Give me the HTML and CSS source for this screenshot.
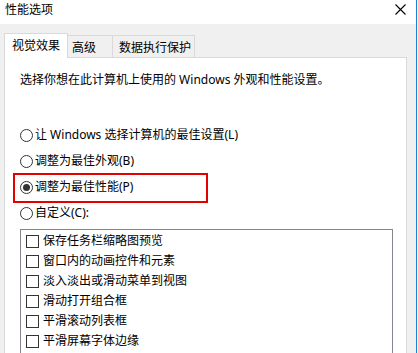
FILE: index.html
```html
<!DOCTYPE html>
<html lang="zh-CN">
<head>
<meta charset="utf-8">
<title>性能选项</title>
<link rel="stylesheet" href="styles.css">
</head>
<body>
<div class="window">
  <div class="titlebar">
    <span class="title">性能选项</span>
    <svg class="close" width="11" height="11" viewBox="0 0 11 11"><path d="M0.5 0.5 L10.5 10.5 M10.5 0.5 L0.5 10.5" stroke="#000" stroke-width="1.1" fill="none"/></svg>
  </div>
  <div class="content">
    <div class="tabs">
      <div class="tab tab-active">视觉效果</div>
      <div class="tab tab-adv">高级</div>
      <div class="tab tab-dep">数据执行保护</div>
    </div>
    <div class="panel">
      <p class="intro">选择你想在此计算机上使用的 Windows 外观和性能设置。</p>
      <div class="radios">
        <div class="radio-row"><span class="radio"></span><span class="label">让 Windows 选择计算机的最佳设置(L)</span></div>
        <div class="radio-row"><span class="radio"></span><span class="label">调整为最佳外观(B)</span></div>
        <div class="radio-row highlight"><span class="radio checked"></span><span class="label">调整为最佳性能(P)</span></div>
        <div class="radio-row"><span class="radio"></span><span class="label">自定义(C):</span></div>
      </div>
      <div class="listbox">
        <div class="check-row"><span class="checkbox"></span><span class="label">保存任务栏缩略图预览</span></div>
        <div class="check-row"><span class="checkbox"></span><span class="label">窗口内的动画控件和元素</span></div>
        <div class="check-row"><span class="checkbox"></span><span class="label">淡入淡出或滑动菜单到视图</span></div>
        <div class="check-row"><span class="checkbox"></span><span class="label">滑动打开组合框</span></div>
        <div class="check-row"><span class="checkbox"></span><span class="label">平滑滚动列表框</span></div>
        <div class="check-row"><span class="checkbox"></span><span class="label">平滑屏幕字体边缘</span></div>
      </div>
    </div>
  </div>
</div>
</body>
</html>
```

FILE: styles.css
```css
html, body {
  margin: 0;
  padding: 0;
  width: 418px;
  height: 353px;
  overflow: hidden;
  background: #ffffff;
}
body {
  font-family: "Noto Sans", "Noto Sans CJK SC", sans-serif;
  font-size: 12px;
  color: #000;
}
.window {
  width: 416px;
  height: 353px;
  overflow: hidden;
  border-right: 1px solid #1883d7;
  display: flex;
  flex-direction: column;
  background: #f0f0f0;
}
.titlebar {
  height: 24px;
  background: #fff;
  display: flex;
  align-items: center;
  justify-content: space-between;
  padding: 0 10px 0 5px;
  flex: none;
}
.title {
  line-height: 16px;
  margin-top: -4px;
}
.close {
  display: block;
  margin-top: -6px;
}
.content {
  padding: 9px 0 0 4px;
  flex: 1;
  min-height: 0;
}
.tabs {
  display: flex;
  align-items: flex-end;
  height: 24px;
  position: relative;
  z-index: 1;
}
.tab {
  box-sizing: border-box;
  background: #f0f0f0;
  border-top: 1px solid #d9d9d9;
  border-right: 1px solid #d9d9d9;
  height: 22px;
  line-height: 20px;
  padding-top: 2px;
}
.tab-active {
  width: 64px;
  height: 25px;
  margin-bottom: -1px;
  background: #fff;
  border-left: 1px solid #d9d9d9;
  padding: 2px 0 0 7px;
  line-height: 20px;
}
.tab-adv {
  width: 45px;
  padding-left: 4px;
}
.tab-dep {
  width: 82px;
  padding-left: 6px;
}
.panel {
  width: 403px;
  box-sizing: border-box;
  height: 300px;
  background: #fff;
  border: 1px solid #d9d9d9;
  padding: 0 0 0 15px;
}
.intro {
  margin: 14px 0 0 0;
  line-height: 16px;
}
.radios {
  margin-top: 34px;
  display: flex;
  flex-direction: column;
}
.radio-row {
  height: 26px;
  display: flex;
  align-items: center;
  gap: 2px;
  position: relative;
}
.radio {
  box-sizing: border-box;
  width: 13px;
  height: 13px;
  border: 1px solid #333;
  border-radius: 50%;
  display: flex;
  align-items: center;
  justify-content: center;
  flex: none;
}
.radio.checked::before {
  content: "";
  width: 7px;
  height: 7px;
  border-radius: 50%;
  background: #333;
}
.label {
  line-height: 16px;
  white-space: nowrap;
}
.highlight::after {
  content: "";
  position: absolute;
  left: -7px;
  top: -1px;
  width: 195px;
  height: 30px;
  box-sizing: border-box;
  border: 2px solid #e50000;
}
.listbox {
  margin-top: 3px;
  width: 373px;
  height: 140px;
  box-sizing: border-box;
  border: 1px solid #828790;
  padding: 1px 0 0 5px;
}
.check-row {
  height: 20px;
  display: flex;
  align-items: center;
  gap: 4px;
}
.checkbox {
  box-sizing: border-box;
  width: 13px;
  height: 13px;
  border: 1px solid #333;
  flex: none;
}
```
